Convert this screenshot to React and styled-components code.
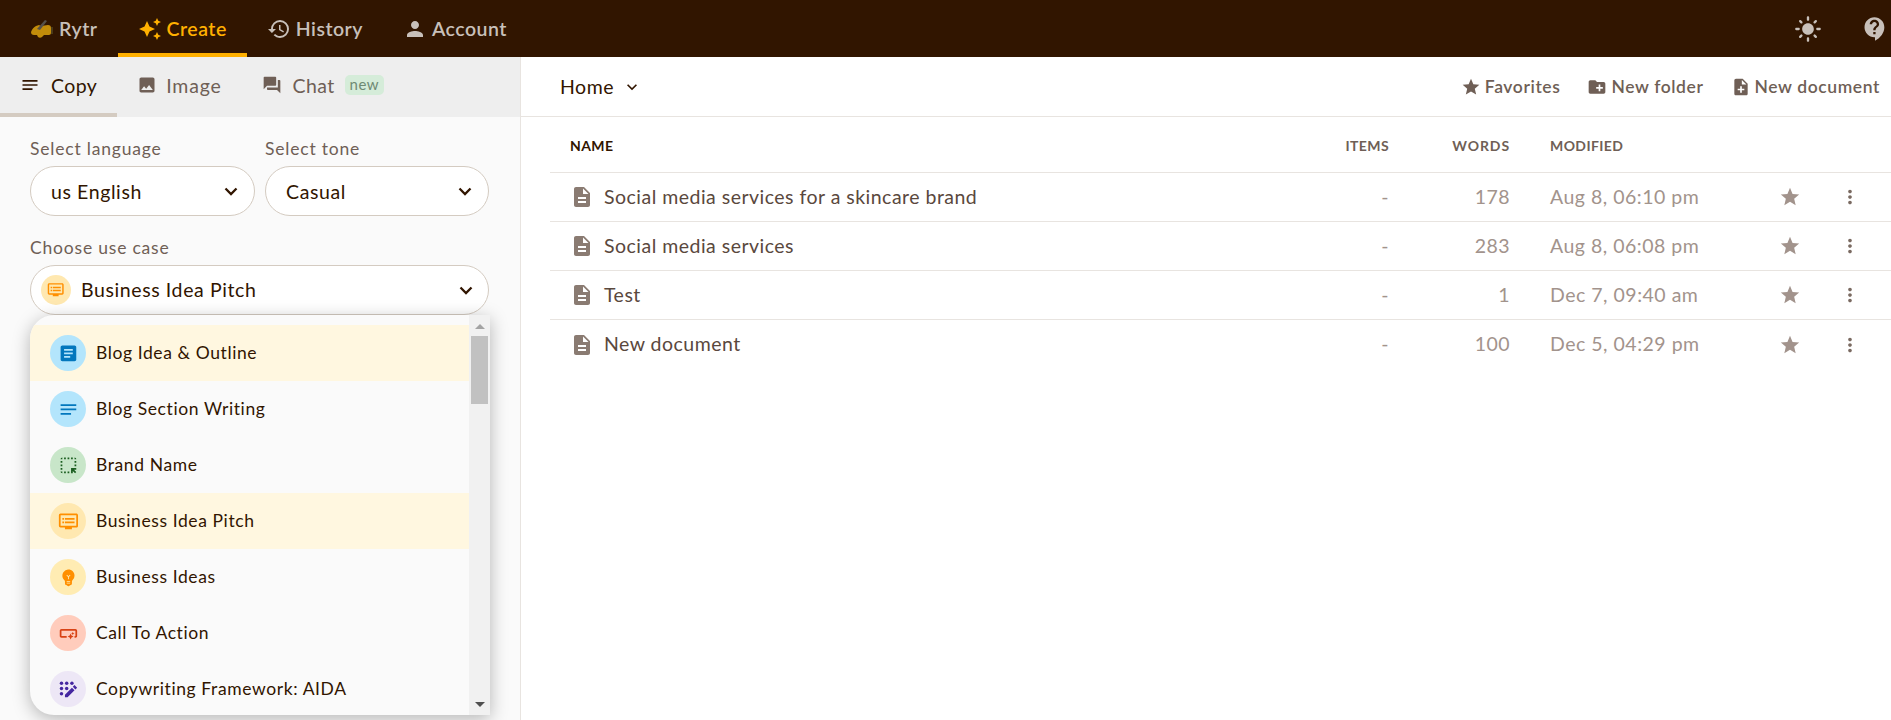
import React from 'react';
import styled, { createGlobalStyle } from 'styled-components';
import {
  MdAutoAwesome, MdHistory, MdPerson, MdLightMode, MdContactSupport, MdNotes, MdImage, MdQuestionAnswer,
  MdStar, MdCreateNewFolder, MdNoteAdd, MdDescription, MdMoreVert, MdKeyboardArrowDown,
  MdArticle, MdHighlightAlt, MdOutlineDvr, MdEmojiObjects, MdSmartButton,
} from 'react-icons/md';

const Global = createGlobalStyle`
  html, body { margin: 0; padding: 0; height: 100%; overflow: hidden; background: #fff; }
  body { font-family: Lato, "Open Sans", sans-serif; color: #311500; }
  * { box-sizing: border-box; }
`;

const Page = styled.div`
  height: 720px;
  display: flex;
  flex-direction: column;
`;

const TopBar = styled.header`
  height: 57px;
  flex: none;
  background: #311500;
  display: flex;
  align-items: stretch;
  justify-content: space-between;
  padding: 0 0 0 10px;
`;

const NavGroup = styled.nav`
  display: flex;
`;

const NavItem = styled.a`
  display: flex;
  align-items: center;
  gap: 5px;
  padding: 0 20px;
  font-size: 19.5px;
  font-weight: 600;
  letter-spacing: 0.5px;
  color: ${p => (p.$active ? '#ffb000' : '#c8c0ba')};
  border-bottom: 4px solid ${p => (p.$active ? '#ffb000' : 'transparent')};
  padding-top: 4px;
  svg { width: 24px; height: 24px; flex: none; }
`;

const TopIcons = styled.div`
  display: flex;
  align-items: center;
  gap: 39px;
  color: #c8c0ba;
  padding-right: 2px;
  svg { width: 28px; height: 28px; }
`;

const Body = styled.div`
  flex: 1;
  display: flex;
  min-height: 0;
`;

const Side = styled.aside`
  width: 521px;
  flex: none;
  background: #fafafa;
  border-right: 1px solid #e8e4e0;
  display: flex;
  flex-direction: column;
`;

const Tabs = styled.div`
  height: 60px;
  flex: none;
  background: #eeeeee;
  display: flex;
`;

const Tab = styled.a`
  display: flex;
  align-items: center;
  gap: ${p => p.$gap || 11}px;
  padding: 0 20px;
  font-size: 19.5px;
  letter-spacing: ${p => p.$spacing || 0.4}px;
  color: ${p => (p.$active ? '#311500' : '#6f5f56')};
  border-bottom: 4px solid ${p => (p.$active ? '#d4cbc1' : 'transparent')};
  svg { width: 20px; height: 20px; flex: none; }
`;

const Badge = styled.span`
  margin-left: -1px;
  padding: 0 5px;
  height: 20px;
  line-height: 19px;
  border-radius: 5px;
  background: #d5ecd9;
  color: #6f8a74;
  font-size: 15px;
  letter-spacing: 0.5px;
`;

const Form = styled.div`
  position: relative;
  flex: 1;
  padding: 21px 31px 0 30px;
`;

const FieldRow = styled.div`
  display: grid;
  grid-template-columns: 225px 224px;
  gap: 10px;
  margin-bottom: 21px;
`;

const Field = styled.div`
  display: flex;
  flex-direction: column;
`;

const Label = styled.label`
  height: 28px;
  font-size: 17.5px;
  letter-spacing: 0.8px;
  line-height: 22px;
  color: #6f5f56;
`;

const Select = styled.div`
  height: 50px;
  border: 1px solid #d4cbc1;
  border-radius: 25px;
  background: #fff;
  display: flex;
  align-items: center;
  justify-content: space-between;
  padding: 0 ${p => (p.$withIcon ? '10px' : '11px')} 0 ${p => (p.$withIcon ? '10px' : '20px')};
  font-size: 19.5px;
  letter-spacing: 0.6px;
  color: #311500;
`;

const ChevronSvg = styled.svg`
  width: 24px;
  height: 24px;
  flex: none;
  fill: none;
  stroke: #311500;
  stroke-width: 2.3;
`;

const Chevron = () => (
  <ChevronSvg viewBox="0 0 24 24"><path d="M6.5 9.5 12 15l5.5-5.5" /></ChevronSvg>
);

const SelectValue = styled.span`
  display: flex;
  align-items: center;
  gap: 10px;
  line-height: 28px;
`;

const Circle = styled.span`
  width: ${p => p.$size}px;
  height: ${p => p.$size}px;
  border-radius: 50%;
  flex: none;
  display: flex;
  align-items: center;
  justify-content: center;
  background: ${p => p.$bg};
  color: ${p => p.$fg};
  svg { width: ${p => p.$size * 0.58}px; height: ${p => p.$size * 0.58}px; }
`;

const SelectText = styled.span`
  padding-bottom: 1px;
`;

const Menu = styled.div`
  position: absolute;
  left: 30px;
  top: 198px;
  width: 460px;
  height: 400px;
  border-radius: 24px 0 0 24px;
  background: #fafafa;
  box-shadow: 0 4px 18px rgba(0, 0, 0, 0.28);
  display: flex;
  overflow: hidden;
`;

const MenuList = styled.div`
  flex: 1;
  padding-top: 10px;
  overflow: hidden;
`;

const MenuItem = styled.div`
  height: 56px;
  display: flex;
  align-items: center;
  gap: 10px;
  padding-left: 20px;
  font-size: 17.5px;
  letter-spacing: 0.6px;
  color: #311500;
  background: ${p => (p.$active ? '#fff7e0' : 'transparent')};
`;

const MenuText = styled.span`
  padding-bottom: 2px;
`;

const ScrollTrack = styled.div`
  position: relative;
  width: 21px;
  flex: none;
  background: #f1f1f1;
`;

const ScrollThumb = styled.div`
  position: absolute;
  left: 2px;
  right: 2px;
  top: 21px;
  height: 68px;
  background: #c1c1c1;
`;

const ScrollArrow = styled.div`
  position: absolute;
  left: 6px;
  ${p => (p.$down ? 'bottom: 8px;' : 'top: 9px;')}
  width: 0;
  height: 0;
  border-left: 5px solid transparent;
  border-right: 5px solid transparent;
  ${p => (p.$down ? 'border-top: 5px solid #505050;' : 'border-bottom: 5px solid #a3a3a3;')}
`;

const Main = styled.main`
  flex: 1;
  min-width: 0;
  display: flex;
  flex-direction: column;
`;

const MainHead = styled.div`
  height: 60px;
  flex: none;
  border-bottom: 1px solid #e8e4e0;
  display: flex;
  align-items: center;
  justify-content: space-between;
  padding: 0 11px 0 39px;
`;

const Crumb = styled.div`
  display: flex;
  align-items: center;
  gap: 8px;
  font-size: 19.5px;
  letter-spacing: 0.5px;
  color: #311500;
  svg { width: 20px; height: 20px; }
`;

const Actions = styled.div`
  display: flex;
  gap: 27px;
`;

const Action = styled.a`
  display: flex;
  align-items: center;
  gap: 4px;
  font-size: 17.5px;
  font-weight: 600;
  letter-spacing: 0.6px;
  color: #6f5f56;
  svg { width: 20px; height: 20px; flex: none; }
`;

const Table = styled.div`
  padding-left: 29px;
`;

const Row = styled.div`
  display: grid;
  grid-template-columns: 1fr 120px 121px 240px 80px 40px;
  padding-right: 21px;
  align-items: center;
  height: ${p => (p.$head ? '56px' : '49px')};
  border-bottom: 1px solid #e8e4e0;
  &:last-child { border-bottom: 0; }
`;

const HeadCell = styled.div`
  padding-top: 2px;
  font-size: 14px;
  font-weight: 700;
  letter-spacing: ${p => p.$spacing || 0.4}px;
  text-transform: uppercase;
  color: ${p => (p.$dark ? '#311500' : '#6f5f56')};
  text-align: ${p => (p.$right ? 'right' : 'left')};
  padding-left: ${p => p.$pad || 0}px;
`;

const NameCell = styled.div`
  display: flex;
  align-items: center;
  gap: 10px;
  padding-left: 20px;
  font-size: 19.5px;
  letter-spacing: 0.48px;
  color: #5a483d;
  svg { width: 24px; height: 24px; color: #8a7b72; flex: none; }
`;

const NameText = styled.span`
  padding-bottom: 2px;
`;

const NumCell = styled.div`
  padding-bottom: 2px;
  text-align: right;
  font-size: 19.5px;
  letter-spacing: 0.4px;
  color: #a2938c;
`;

const DateCell = styled.div`
  padding: 0 0 2px 40px;
  font-size: 19.5px;
  letter-spacing: 0.5px;
  color: #a2938c;
`;

const IconCell = styled.div`
  display: flex;
  justify-content: center;
  color: ${p => p.$color || '#a2938c'};
  svg { width: 22px; height: 22px; }
`;

const HandLogo = () => (
  <svg viewBox="0 0 24 24">
    <path d="M1 15c1-3 3-5 5-6l3-1 2 1 7-1c2 0 3 1 3 3v5c0 1-1 2-2 2h-5l-2 2c-1 1-3 1-4 0l-1-2-3 0c-2 0-3-1-3-3z" fill="#c28c0a" />
    <path d="M7 12 15 3l2 1-7 9z" fill="#55504a" />
    <path d="M21 10h2v7h-2z" fill="#4a3a1a" />
  </svg>
);

const AidaIcon = () => (
  <svg viewBox="0 0 24 24" fill="currentColor">
    <circle cx="4" cy="5" r="2" /><circle cx="10" cy="5" r="2" /><circle cx="16" cy="5" r="2" />
    <circle cx="4" cy="11" r="2" /><circle cx="10" cy="11" r="2" />
    <circle cx="4" cy="17" r="2" />
    <path d="M8 21v-3l8-8 3 3-8 8zM17 9l2-2 3 3-2 2z" />
  </svg>
);

const uses = [
  { name: 'Blog Idea & Outline', Icon: MdArticle, bg: '#b3e5fc', fg: '#0277bd', active: true },
  { name: 'Blog Section Writing', Icon: MdNotes, bg: '#b3e5fc', fg: '#0277bd' },
  { name: 'Brand Name', Icon: MdHighlightAlt, bg: '#c8e6c9', fg: '#1b5e20' },
  { name: 'Business Idea Pitch', Icon: MdOutlineDvr, bg: '#ffe8b0', fg: '#ff8f00', active: true },
  { name: 'Business Ideas', Icon: MdEmojiObjects, bg: '#ffecb3', fg: '#ff8f00' },
  { name: 'Call To Action', Icon: MdSmartButton, bg: '#ffccbc', fg: '#d84315' },
  { name: 'Copywriting Framework: AIDA', Icon: AidaIcon, bg: '#ede7f6', fg: '#4527a0' },
];

const docs = [
  { name: 'Social media services for a skincare brand', words: 178, date: 'Aug 8, 06:10 pm' },
  { name: 'Social media services', words: 283, date: 'Aug 8, 06:08 pm' },
  { name: 'Test', words: 1, date: 'Dec 7, 09:40 am' },
  { name: 'New document', words: 100, date: 'Dec 5, 04:29 pm' },
];

export default function App() {
  return (
    <Page>
      <Global />
      <TopBar>
        <NavGroup>
          <NavItem><HandLogo />Rytr</NavItem>
          <NavItem $active><MdAutoAwesome />Create</NavItem>
          <NavItem><MdHistory />History</NavItem>
          <NavItem><MdPerson />Account</NavItem>
        </NavGroup>
        <TopIcons>
          <MdLightMode />
          <MdContactSupport />
        </TopIcons>
      </TopBar>
      <Body>
        <Side>
          <Tabs>
            <Tab $active><MdNotes />Copy</Tab>
            <Tab $gap={9} $spacing={0.8}><MdImage />Image</Tab>
            <Tab><MdQuestionAnswer />Chat<Badge>new</Badge></Tab>
          </Tabs>
          <Form>
            <FieldRow>
              <Field>
                <Label>Select language</Label>
                <Select>us English<Chevron /></Select>
              </Field>
              <Field>
                <Label>Select tone</Label>
                <Select>Casual<Chevron /></Select>
              </Field>
            </FieldRow>
            <Field>
              <Label>Choose use case</Label>
              <Select $withIcon>
                <SelectValue>
                  <Circle $size={30} $bg="#ffe8b0" $fg="#ff8f00"><MdOutlineDvr /></Circle>
                  <SelectText>Business Idea Pitch</SelectText>
                </SelectValue>
                <Chevron />
              </Select>
            </Field>
            <Menu>
              <MenuList>
                {uses.map(u => (
                  <MenuItem key={u.name} $active={u.active}>
                    <Circle $size={36} $bg={u.bg} $fg={u.fg}><u.Icon /></Circle>
                    <MenuText>{u.name}</MenuText>
                  </MenuItem>
                ))}
              </MenuList>
              <ScrollTrack>
                <ScrollArrow />
                <ScrollThumb />
                <ScrollArrow $down />
              </ScrollTrack>
            </Menu>
          </Form>
        </Side>
        <Main>
          <MainHead>
            <Crumb>Home<MdKeyboardArrowDown /></Crumb>
            <Actions>
              <Action><MdStar />Favorites</Action>
              <Action><MdCreateNewFolder />New folder</Action>
              <Action><MdNoteAdd />New document</Action>
            </Actions>
          </MainHead>
          <Table>
            <Row $head>
              <HeadCell $dark $pad={20}>Name</HeadCell>
              <HeadCell $right>Items</HeadCell>
              <HeadCell $right $spacing={0.9}>Words</HeadCell>
              <HeadCell $pad={40}>Modified</HeadCell>
            </Row>
            {docs.map(d => (
              <Row key={d.name}>
                <NameCell><MdDescription /><NameText>{d.name}</NameText></NameCell>
                <NumCell>-</NumCell>
                <NumCell>{d.words}</NumCell>
                <DateCell>{d.date}</DateCell>
                <IconCell><MdStar /></IconCell>
                <IconCell $color="#7a6a61"><MdMoreVert /></IconCell>
              </Row>
            ))}
          </Table>
        </Main>
      </Body>
    </Page>
  );
}
